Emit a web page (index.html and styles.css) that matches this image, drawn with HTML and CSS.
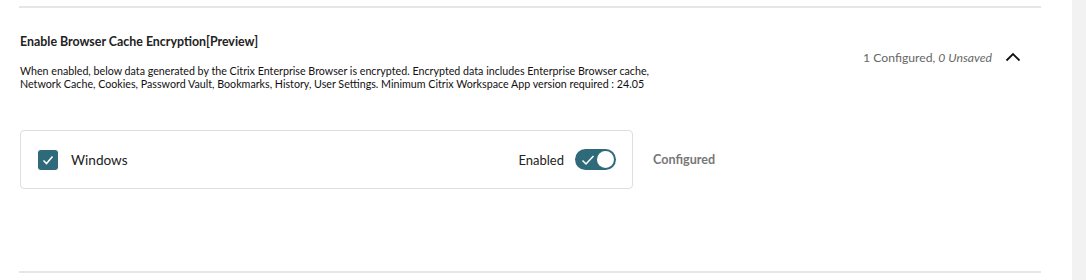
FILE: index.html
```html
<!DOCTYPE html>
<html lang="en">
<head>
    <meta charset="UTF-8">
    <meta name="viewport" content="width=device-width, initial-scale=1.0">
    <title>Browser Cache Encryption</title>
    <link rel="stylesheet" href="styles.css">
</head>
<body>

<div class="page">
    <div class="main">
        <div class="section">
            <div class="section-head">
                <div class="head-text">
                    <h3 class="title">Enable Browser Cache Encryption[Preview]</h3>
                    <p class="desc">When enabled, below data generated by the Citrix Enterprise Browser is encrypted. Encrypted data includes Enterprise Browser cache,<br>Network Cache, Cookies, Password Vault, Bookmarks, History, User Settings. Minimum Citrix Workspace App version required : 24.05</p>
                </div>
                <div class="summary">
                    <span>1 Configured, <em>0 Unsaved</em></span>
                    <svg class="chevron" width="16" height="10" viewBox="0 0 16 10">
                        <path d="M1.5 8.5 L8 2 L14.5 8.5" fill="none" stroke="#111" stroke-width="1.8"/>
                    </svg>
                </div>
            </div>

            <div class="platform-row">
                <div class="platform-card">
                    <div class="platform-name">
                        <span class="checkbox">
                            <svg width="14" height="14" viewBox="0 0 14 14">
                                <path d="M2.5 7.5 L5.5 10.5 L11.5 3.5" fill="none" stroke="#fff" stroke-width="1.6"/>
                            </svg>
                        </span>
                        <span>Windows</span>
                    </div>
                    <div class="platform-state">
                        <span>Enabled</span>
                        <span class="toggle">
                            <svg width="14" height="12" viewBox="0 0 14 12">
                                <path d="M1.5 6.5 L5 10 L12.5 2" fill="none" stroke="#fff" stroke-width="1.5"/>
                            </svg>
                            <span class="knob"></span>
                        </span>
                    </div>
                </div>
                <div class="status">Configured</div>
            </div>
        </div>
    </div>
    <div class="scroll-strip"></div>
</div>

</body>
</html>
```

FILE: styles.css
```css
body {
    margin: 0;
    padding: 0;
    font-family: Lato, "Open Sans", sans-serif;
    color: #222;
    background: #fff;
}

.page {
    display: flex;
    height: 280px;
    overflow: hidden;
}

.main {
    flex: 1;
    padding-top: 6px;
}

.scroll-strip {
    width: 14px;
    background-color: #f2f2f2;
}

.section {
    margin-left: 19px;
    width: 1022px;
    height: 267px;
    border-top: 2px solid #e6e6e6;
    border-bottom: 2px solid #e6e6e6;
    box-sizing: border-box;
}

.section-head {
    display: flex;
    justify-content: space-between;
}

.head-text {
    padding-left: 1px;
}

.title {
    margin: 26px 0 0 0;
    font-size: 12.4px;
    font-weight: bold;
    line-height: 16px;
}

.desc {
    margin: 14px 0 0 0;
    font-size: 10.7px;
    line-height: 13px;
    color: #111;
}

.summary {
    display: flex;
    align-items: center;
    gap: 13px;
    margin-top: 41px;
    margin-right: 20px;
    height: 16px;
    font-size: 12.2px;
    color: #666;
}

.summary em {
    font-style: italic;
}

.chevron {
    display: block;
}

.platform-row {
    display: flex;
    align-items: center;
    margin-top: 40px;
}

.platform-card {
    display: flex;
    justify-content: space-between;
    align-items: center;
    width: 613px;
    height: 59px;
    margin-left: 1px;
    border: 1px solid #dedede;
    border-radius: 4px;
    box-sizing: border-box;
    padding: 0 16px 0 17px;
}

.platform-name,
.platform-state {
    display: flex;
    align-items: center;
    font-size: 13px;
    color: #222;
}

.platform-name {
    gap: 13px;
    font-size: 13.6px;
}

.platform-state {
    gap: 11px;
}

.checkbox {
    display: flex;
    align-items: center;
    justify-content: center;
    width: 20px;
    height: 20px;
    border-radius: 3px;
    background-color: #2f6a7b;
}

.toggle {
    display: flex;
    align-items: center;
    justify-content: space-between;
    width: 41px;
    height: 21px;
    border-radius: 11px;
    background-color: #2f6a7b;
    box-sizing: border-box;
    padding: 0 2px 0 6px;
}

.knob {
    width: 17px;
    height: 17px;
    border-radius: 50%;
    background-color: #fff;
}

.status {
    margin-left: 20px;
    font-size: 12.6px;
    font-weight: bold;
    color: #777;
}
```
